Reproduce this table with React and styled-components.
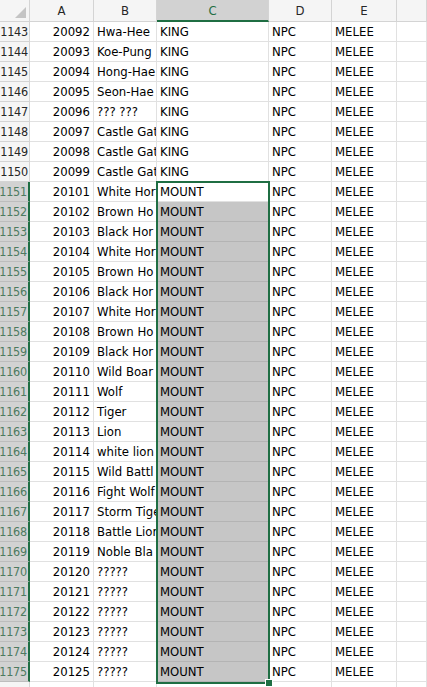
import React from 'react';
import styled, { createGlobalStyle } from 'styled-components';

const GlobalStyle = createGlobalStyle`
  html, body {
    margin: 0;
    padding: 0;
    background: #ffffff;
    overflow: hidden;
  }
  body {
    font-family: "DejaVu Sans Condensed", "Liberation Sans Narrow", Roboto, sans-serif;
  }
`

const GREEN = '#1f6e43';
const GRID = '#e1e1e1';
const HEADER_LINE = '#d4d4d4';

// visible part of column B, as the sheet clips it against column C
const names = [
  'Hwa-Hee', 'Koe-Pung', 'Hong-Hae', 'Seon-Hae', '??? ???',
  'Castle Gat', 'Castle Gat', 'Castle Gat',
  'White Hor', 'Brown Ho', 'Black Hor', 'White Hor', 'Brown Ho', 'Black Hor',
  'White Hor', 'Brown Ho', 'Black Hor', 'Wild Boar', 'Wolf', 'Tiger', 'Lion',
  'white lion', 'Wild Battl', 'Fight Wolf', 'Storm Tige', 'Battle Lion', 'Noble Bla',
  '?????', '?????', '?????', '?????', '?????', '?????'
];

const rows = names.map((name, i) => ({
  num: 1143 + i,
  id: i < 8 ? 20092 + i : 20093 + i,
  name,
  type: i < 8 ? 'KING' : 'MOUNT',
  kind: 'NPC',
  attack: 'MELEE',
}));

const SELECT_START = 8;

const App = () => {
  return (
    <>
      <GlobalStyle />
      <Sheet>
        <Corner><CornerMark /></Corner>
        <ColHeader>A</ColHeader>
        <ColHeader>B</ColHeader>
        <ColHeader $selected>C</ColHeader>
        <ColHeader>D</ColHeader>
        <ColHeader>E</ColHeader>
        <ColHeader />

        {rows.map((row, i) => {
          const inRange = i >= SELECT_START;
          return (
            <React.Fragment key={row.num}>
              <RowHeader $selected={inRange}>{row.num}</RowHeader>
              <Cell $align='right'>{row.id}</Cell>
              <Cell>{row.name}</Cell>
              <Cell $selected={inRange && i !== SELECT_START}>{row.type}</Cell>
              <Cell>{row.kind}</Cell>
              <Cell>{row.attack}</Cell>
              <Cell />
            </React.Fragment>
          )
        })}

        <RowHeader />
        <Cell /><Cell /><Cell /><Cell /><Cell /><Cell />

        <SelectionBox>
          <FillHandle />
        </SelectionBox>
      </Sheet>
    </>
  );
}

const Sheet = styled.div`
  position: relative;
  display: grid;
  grid-template-columns: 30px 64px 63px 112px 63px 65px 1fr;
  grid-template-rows: 22px;
  grid-auto-rows: 20px;
  width: 427px;
`

const Corner = styled.div`
  position: relative;
  background: #f5f5f5;
  border-right: 1px solid ${HEADER_LINE};
  border-bottom: 1px solid ${HEADER_LINE};
  box-sizing: border-box;
`

const CornerMark = styled.div`
  position: absolute;
  right: 3px;
  bottom: 3px;
  width: 0;
  height: 0;
  border-left: 11px solid transparent;
  border-bottom: 11px solid #c4c4c4;
`

const ColHeader = styled.div`
  display: flex;
  align-items: center;
  justify-content: center;
  box-sizing: border-box;
  font-size: 13px;
  color: ${props => props.$selected ? GREEN : '#262626'};
  background: ${props => props.$selected ? '#d2d2d2' : '#f5f5f5'};
  border-right: 1px solid ${HEADER_LINE};
  border-bottom: ${props => props.$selected ? `2px solid ${GREEN}` : `1px solid ${HEADER_LINE}`};
  padding-top: ${props => props.$selected ? '1px' : '0'};
`

const RowHeader = styled.div`
  display: flex;
  align-items: flex-end;
  justify-content: flex-end;
  box-sizing: border-box;
  padding: 0 1px 1px 0;
  font-size: 12.5px;
  line-height: 17px;
  letter-spacing: -0.2px;
  overflow: hidden;
  color: ${props => props.$selected ? '#4d7a60' : '#262626'};
  background: ${props => props.$selected ? '#d2d2d2' : '#f5f5f5'};
  border-right: ${props => props.$selected ? `2px solid ${GREEN}` : `1px solid ${HEADER_LINE}`};
  border-bottom: 1px solid ${props => props.$selected ? '#bdbdbd' : HEADER_LINE};
`

const Cell = styled.div`
  display: flex;
  align-items: flex-end;
  justify-content: ${props => props.$align === 'right' ? 'flex-end' : 'flex-start'};
  box-sizing: border-box;
  padding: 0 3px 1px 3px;
  font-size: 13px;
  line-height: 17px;
  color: #000000;
  white-space: nowrap;
  overflow: hidden;
  background: ${props => props.$selected ? '#c6c6c6' : '#ffffff'};
  border-right: 1px solid ${props => props.$selected ? '#b4b4b4' : GRID};
  border-bottom: 1px solid ${props => props.$selected ? '#b4b4b4' : GRID};
`

const SelectionBox = styled.div`
  position: absolute;
  left: 156px;
  top: 181px;
  width: 114px;
  height: 503px;
  box-sizing: border-box;
  border: 2px solid ${GREEN};
  pointer-events: none;
`

const FillHandle = styled.div`
  position: absolute;
  right: -5px;
  bottom: -5px;
  width: 6px;
  height: 6px;
  background: ${GREEN};
  border: 1px solid #ffffff;
`

export default App;
